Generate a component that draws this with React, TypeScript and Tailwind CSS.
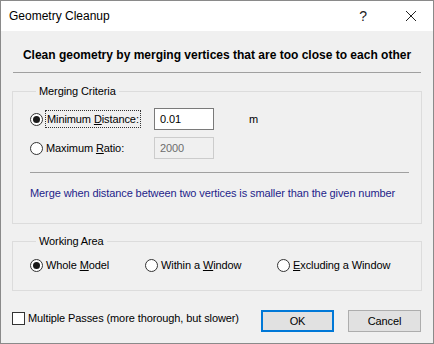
import React from "react";

const font = { fontFamily: '"Liberation Sans", Arial, sans-serif' };

function Radio({ checked }: { checked?: boolean }) {
  return (
    <span className="flex h-[13px] w-[13px] shrink-0 items-center justify-center rounded-full border border-[#333] bg-white">
      {checked && <span className="h-[7px] w-[7px] rounded-full bg-[#1a1a1a]" />}
    </span>
  );
}

function GroupBox({ title, className, children }: { title: string; className?: string; children: React.ReactNode }) {
  return (
    <fieldset className={`border border-[#dcdcdc] ${className ?? ""}`}>
      <legend className="ml-[6px] px-[3px] text-[11px] leading-[16px] text-black">{title}</legend>
      {children}
    </fieldset>
  );
}

export default function App() {
  return (
    <div
      className="flex h-[344px] w-[434px] flex-col border border-[#8a8a8a] bg-[#f0f0f0] text-[11px] tracking-[-0.1px] text-black"
      style={font}
    >
      {/* title bar */}
      <div className="flex h-[30px] shrink-0 items-center bg-white pl-[8px] tracking-normal">
        <span className="flex-1 text-[12px]">Geometry Cleanup</span>
        <span className="mr-[38px] text-[14px] text-[#222]">?</span>
        <svg width="12" height="12" viewBox="0 0 12 12" className="mr-[16px]">
          <path d="M1 1 L11 11 M11 1 L1 11" stroke="#222" strokeWidth="1" />
        </svg>
      </div>

      <div className="flex flex-1 flex-col px-[11px]">
        <div className="mt-[16px] text-center text-[12px] font-bold leading-[16px] tracking-normal">
          Clean geometry by merging vertices that are too close to each other
        </div>
        <div className="mx-[1px] mt-[9px] h-px bg-[#a0a0a0]" />

        <GroupBox title="Merging Criteria" className="mt-[10px] h-[141px] pl-[17px] pr-[12px]">
          <div className="mt-[9px] flex h-[22px] items-center">
            <Radio checked />
            <span className="ml-[2px] w-[109px]">
              <span className="border border-dotted border-[#333] px-[1px] py-[2px]">
                Minimum <u>D</u>istance:
              </span>
            </span>
            <div className="flex h-[22px] w-[60px] items-center border border-[#7a7a7a] bg-white pl-[5px]">0.01</div>
            <span className="ml-[35px]">m</span>
          </div>
          <div className="mt-[7px] flex h-[22px] items-center">
            <Radio />
            <span className="ml-[3px] w-[108px]">
              Maximum <u>R</u>atio:
            </span>
            <div className="flex h-[22px] w-[60px] items-center border border-[#cccccc] bg-[#f0f0f0] pl-[5px] text-[#6d6d6d]">
              2000
            </div>
          </div>
          <div className="mt-[13px] h-px bg-[#a0a0a0]" />
          <div className="mt-[12px] text-[#1e1e8a]">
            Merge when distance between two vertices is smaller than the given number
          </div>
        </GroupBox>

        <GroupBox title="Working Area" className="mt-[9px] h-[58px] pl-[17px]">
          <div className="mt-[8px] flex items-center">
            <div className="flex w-[115px] items-center">
              <Radio checked />
              <span className="ml-[3px]">
                Whole <u>M</u>odel
              </span>
            </div>
            <div className="flex w-[132px] items-center">
              <Radio />
              <span className="ml-[3px]">
                Within a <u>W</u>indow
              </span>
            </div>
            <div className="flex items-center">
              <Radio />
              <span className="ml-[3px]">
                <u>E</u>xcluding a Window
              </span>
            </div>
          </div>
        </GroupBox>

        <div className="mt-[19px] flex items-center">
          <div className="mb-[5px] flex flex-1 items-center">
            <span className="h-[13px] w-[13px] border border-[#333] bg-white" />
            <span className="ml-[3px]">Multiple Passes (more thorough, but slower)</span>
          </div>
          <button className="mr-[14px] h-[22px] w-[73px] border-2 border-[#0078d7] bg-[#e1e1e1] text-[11px]">
            OK
          </button>
          <button className="mr-[1px] h-[22px] w-[73px] border border-[#adadad] bg-[#e1e1e1] text-[11px]">
            Cancel
          </button>
        </div>
      </div>
    </div>
  );
}
